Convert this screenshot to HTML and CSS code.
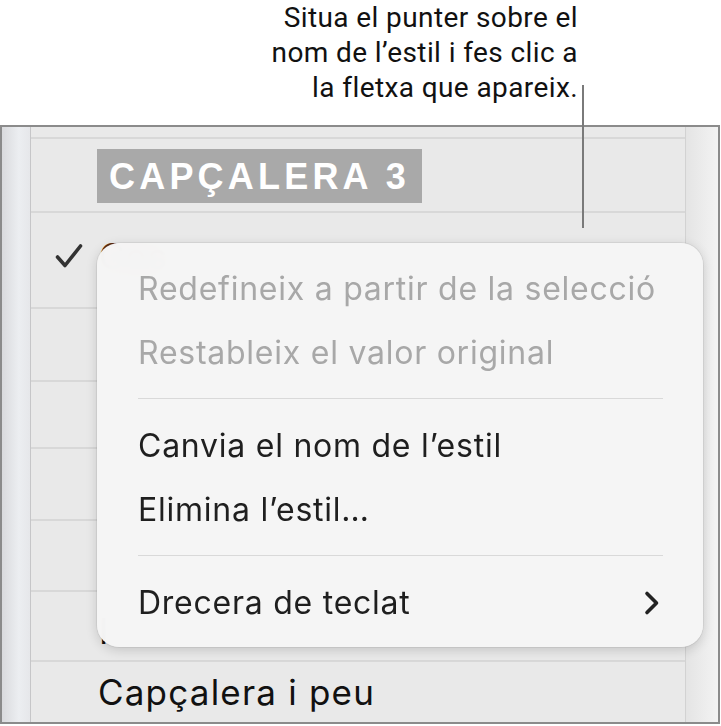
FILE: index.html
```html
<!DOCTYPE html>
<html lang="ca">
<head>
  <meta charset="UTF-8" />
  <title>Estils de paràgraf</title>
  <link rel="stylesheet" href="styles.css">
</head>
<body>
  <div class="pagina">

    <!-- Nota explicativa -->
    <div class="nota">
      <p>Situa el punter sobre el<br>nom de l’estil i fes clic a<br>la fletxa que apareix.</p>
    </div>
    <div class="linia-nota"></div>

    <!-- Llista d'estils -->
    <div class="marc">
      <div class="vora-esq"></div>
      <div class="llista">
        <div class="fila f0"></div>
        <div class="fila f1">
          <span class="capcalera3">CAPÇALERA 3</span>
        </div>
        <div class="fila f2">
          <svg class="check" width="30" height="28" viewBox="0 0 30 28">
            <path d="M3.5 15 L11 23.5 L26.5 4" fill="none" stroke="#333" stroke-width="3.6" stroke-linecap="round" stroke-linejoin="round"/>
          </svg>
          <span class="nom marro">Cos</span>
        </div>
        <div class="fila f3"></div>
        <div class="fila f4"></div>
        <div class="fila f5"></div>
        <div class="fila f6"></div>
        <div class="fila f7"><span class="nom baix">I</span></div>
        <div class="fila f8"><span class="nom">Capçalera i peu</span></div>
      </div>
      <div class="vora-dreta"></div>
    </div>

    <!-- Menú de l'estil -->
    <div class="menu">
      <div class="opcio inactiva">Redefineix a partir de la selecció</div>
      <div class="opcio inactiva">Restableix el valor original</div>
      <div class="separador"></div>
      <div class="opcio">Canvia el nom de l’estil</div>
      <div class="opcio">Elimina l’estil…</div>
      <div class="separador"></div>
      <div class="opcio submenu">
        <span>Drecera de teclat</span>
        <svg width="18" height="26" viewBox="0 0 18 26">
          <path d="M4 3.5 L13.5 13 L4 22.5" fill="none" stroke="#222" stroke-width="3.6" stroke-linecap="round" stroke-linejoin="round"/>
        </svg>
      </div>
    </div>

  </div>
</body>
</html>
```

FILE: styles.css
```css
body {
  margin: 0;
  background: white;
  font-family: Inter, "Noto Sans", sans-serif;
  color: #1d1d1d;
}

.pagina {
  position: relative;
  width: 721px;
  height: 726px;
  overflow: hidden;
}

/* nota de dalt */
.nota {
  height: 125px;
}

.nota p {
  margin: 0;
  padding-right: 143px;
  text-align: right;
  font-family: Roboto, sans-serif;
  font-size: 28px;
  letter-spacing: 0.4px;
  line-height: 35px;
  color: #111;
}

.linia-nota {
  position: absolute;
  left: 582px;
  top: 85px;
  width: 2px;
  height: 143px;
  background: #7a7a7a;
  z-index: 1;
}

/* marc de la llista */
.marc {
  display: flex;
  box-sizing: border-box;
  width: 720px;
  height: 599px;
  border: 2px solid #8b8b8b;
}

.vora-esq {
  width: 28px;
  border-right: 1px solid #c6c6c8;
  background: linear-gradient(to right, #d9dadd, #eceef1 60%, #e6e7ea);
}

.vora-dreta {
  width: 32px;
  border-left: 1px solid #d2d2d2;
  background: linear-gradient(to right, #e4e4e4, #f3f3f3);
}

.llista {
  flex: 1;
  display: flex;
  flex-direction: column;
  background: #e9e9e9;
}

.fila {
  box-sizing: border-box;
  display: flex;
  align-items: center;
  border-bottom: 2px solid #d8d8d8;
  flex-shrink: 0;
}

.f0 { height: 12px; }
.f1 { height: 74px; align-items: flex-start; padding: 10px 0 0 66px; }
.f2 { height: 96px; padding: 0 0 8px 23px; }
.f3 { height: 73px; }
.f4 { height: 67px; }
.f5 { height: 72px; }
.f6 { height: 71px; }
.f7 { height: 70px; padding-left: 68px; }
.f8 { flex: 1; border-bottom: none; padding-left: 67px; }

.capcalera3 {
  display: block;
  box-sizing: border-box;
  width: 325px;
  height: 54px;
  padding-left: 12px;
  background: #a9a9a9;
  color: white;
  font-family: "Liberation Sans", Arial, sans-serif;
  font-weight: bold;
  font-size: 36px;
  letter-spacing: 4.2px;
  line-height: 56px;
}

.check {
  margin-right: 15px;
}

.nom {
  font-size: 35px;
  letter-spacing: 1.2px;
  color: #111;
}

.marro {
  color: #5b2c14;
}

.baix {
  padding-top: 10px;
}

/* menú desplegable */
.menu {
  position: absolute;
  left: 97px;
  top: 243px;
  box-sizing: border-box;
  width: 606px;
  height: 404px;
  padding: 14px 0 12px;
  border-radius: 22px;
  background: rgba(245, 245, 245, 0.98);
  backdrop-filter: blur(14px);
  box-shadow: 0 3px 12px rgba(0, 0, 0, 0.16), 0 0 0 1px rgba(0, 0, 0, 0.06);
  z-index: 2;
}

.opcio {
  height: 64px;
  padding-left: 41px;
  font-size: 32px;
  letter-spacing: 0.75px;
  line-height: 64px;
  color: #1f1f1f;
  white-space: nowrap;
}

.inactiva {
  color: #a8a8a8;
}

.separador {
  height: 1px;
  margin: 13px 40px 15px 41px;
  background: #d9d9d9;
}

.submenu {
  display: flex;
  justify-content: space-between;
  align-items: center;
  padding-right: 42px;
}
```
